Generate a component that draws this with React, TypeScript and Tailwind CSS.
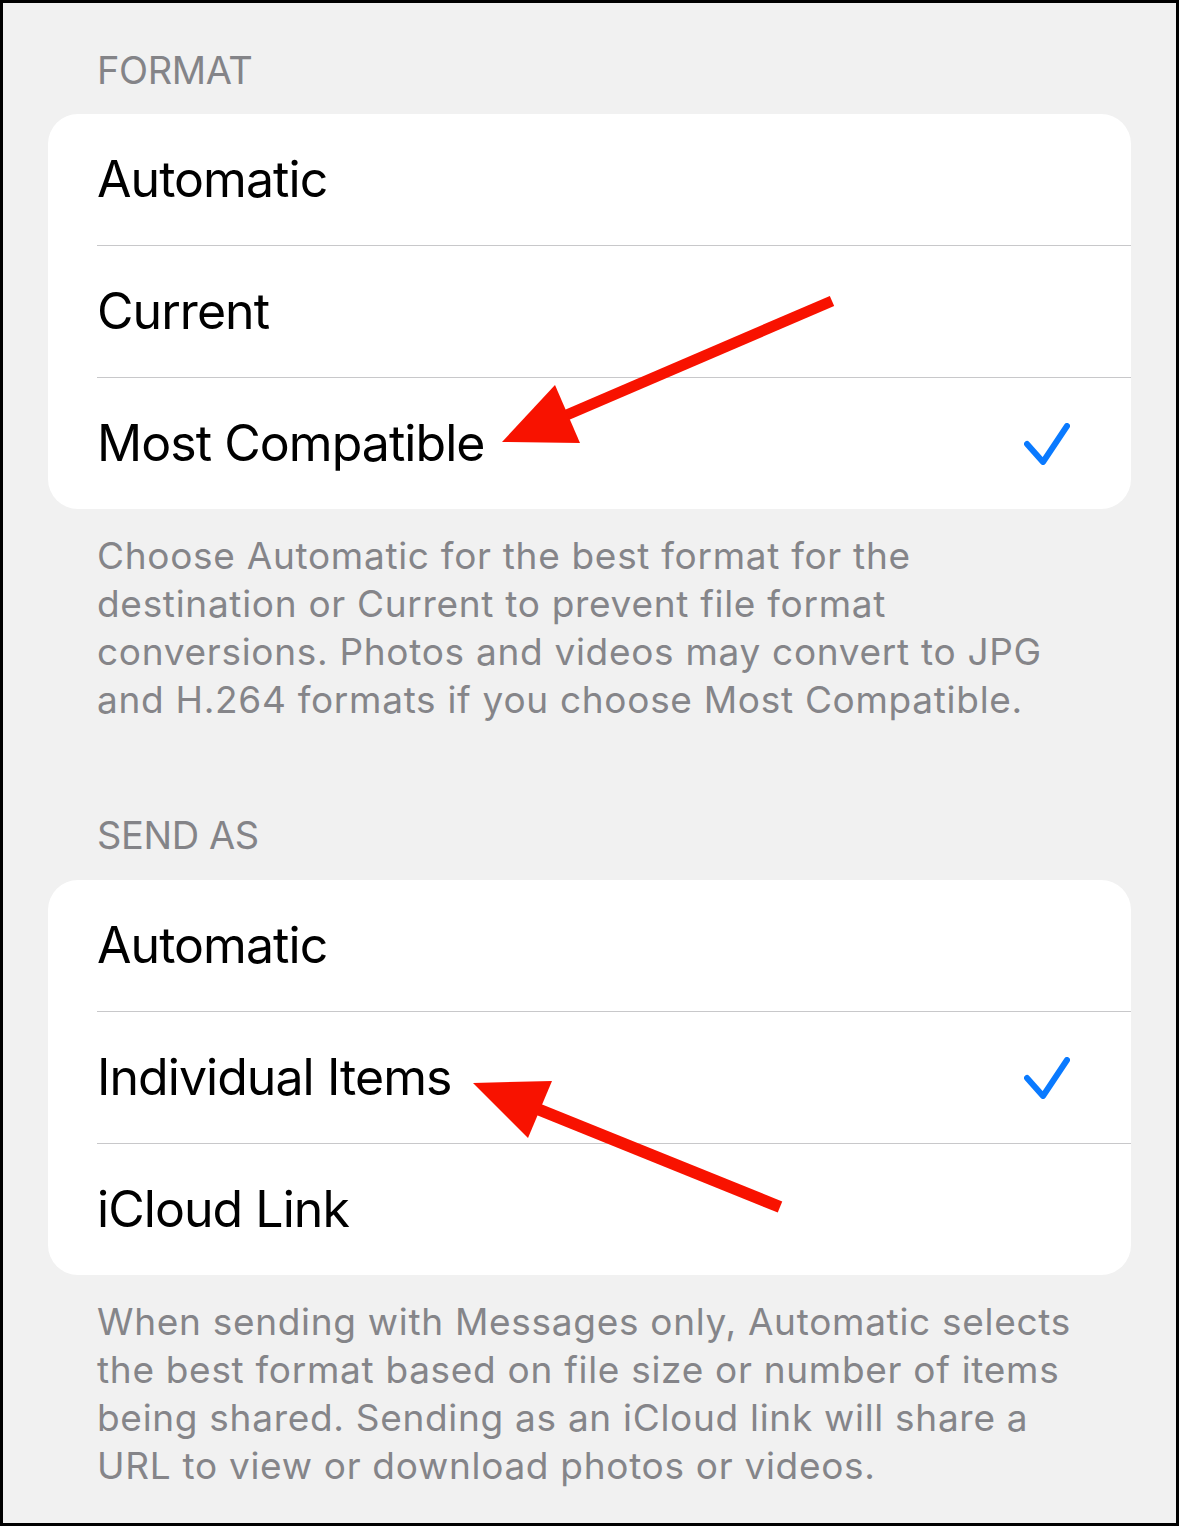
function Check() {
  return (
    <svg width="46" height="42" viewBox="0 0 46 42" fill="none">
      <path d="M3 21 L19 39 L43 3" stroke="#0a7aff" strokeWidth="6" strokeLinecap="round" strokeLinejoin="round" />
    </svg>
  );
}

function Row({ label, checked, first }: { label: string; checked?: boolean; first?: boolean }) {
  return (
    <div className={`ml-[49px] flex items-center justify-between pr-[61px] ${first ? "h-[131px]" : "h-[132px] border-t border-[#c8c8ca]"}`}>
      <span className="text-[50px] tracking-[-0.95px] text-black">{label}</span>
      {checked && <Check />}
    </div>
  );
}

function Header({ children, className }: { children: string; className: string }) {
  return (
    <div className={`pl-[49px] text-[38px] leading-[48px] tracking-[-0.4px] text-[#848488] ${className}`}>{children}</div>
  );
}

function Footer({ lines }: { lines: string[] }) {
  return (
    <p className="mt-[23px] pl-[49px] text-[37px] leading-[48px] tracking-[0.7px] text-[#858589]">
      {lines.map((l, i) => (
        <span key={i} className="block">{l}</span>
      ))}
    </p>
  );
}

export default function App() {
  return (
    <div className="relative w-[1179px] h-[1526px] border-[3px] border-black bg-[#f1f1f1] px-[45px] font-['Inter',sans-serif]">
      <Header className="pt-[43px]">FORMAT</Header>
      <div className="mt-[20px] rounded-[30px] bg-white">
        <Row label="Automatic" first />
        <Row label="Current" />
        <Row label="Most Compatible" checked />
      </div>
      <Footer
        lines={[
          "Choose Automatic for the best format for the",
          "destination or Current to prevent file format",
          "conversions. Photos and videos may convert to JPG",
          "and H.264 formats if you choose Most Compatible.",
        ]}
      />
      <Header className="mt-[87px]">SEND AS</Header>
      <div className="mt-[21px] rounded-[30px] bg-white">
        <Row label="Automatic" first />
        <Row label="Individual Items" checked />
        <Row label="iCloud Link" />
      </div>
      <Footer
        lines={[
          "When sending with Messages only, Automatic selects",
          "the best format based on file size or number of items",
          "being shared. Sending as an iCloud link will share a",
          "URL to view or download photos or videos.",
        ]}
      />

      {/* annotation arrows */}
      <svg className="absolute left-[-3px] top-[-3px] pointer-events-none" width="1179" height="1526" viewBox="0 0 1179 1526">
        <line x1="832" y1="301" x2="562" y2="417" stroke="#f81200" strokeWidth="11" />
        <polygon points="502,442 555,385 580,443" fill="#f81200" />
        <line x1="780" y1="1207" x2="535" y2="1108" stroke="#f81200" strokeWidth="12" />
        <polygon points="473,1083 552,1081 528,1138" fill="#f81200" />
      </svg>
    </div>
  );
}
